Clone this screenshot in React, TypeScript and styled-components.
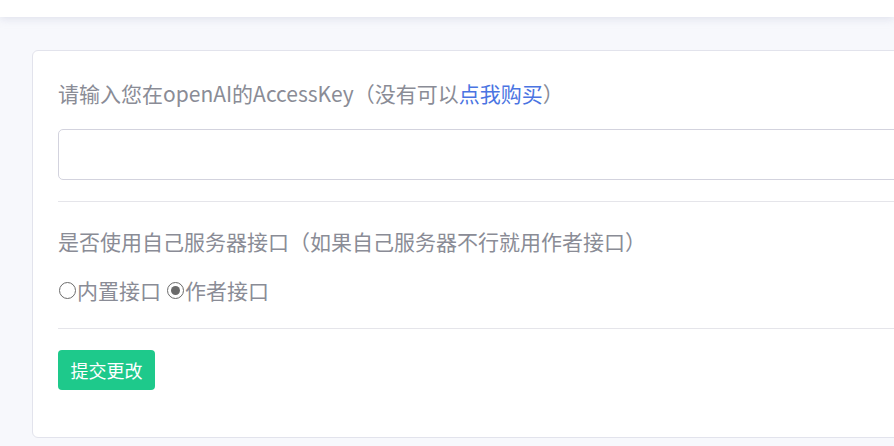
import React, { useState } from "react";
import styled, { createGlobalStyle } from "styled-components";

const Global = createGlobalStyle`
  html, body { margin: 0; padding: 0; background: #f7f8fc; overflow: hidden; }
  body { font-family: "Noto Sans CJK SC", "Noto Sans", sans-serif; }
  * { box-sizing: border-box; }
`;

const Page = styled.div`
  width: 894px;
  height: 446px;
  background: #f7f8fc;
  overflow: hidden;
`;

const Header = styled.header`
  height: 17px;
  background: #ffffff;
  box-shadow: 0 2px 8px rgba(180, 184, 210, 0.35);
`;

const Main = styled.main`
  padding: 33px 0 0 32px;
`;

const Card = styled.section`
  width: 900px;
  height: 388px;
  background: #ffffff;
  border: 1px solid #e2e3ec;
  border-radius: 6px;
  padding: 26px 25px 0 25px;
  display: flex;
  flex-direction: column;
`;

const Label = styled.div<{ $top?: number }>`
  margin-top: ${(p) => p.$top ?? 0}px;
  font-size: 21px;
  line-height: 32px;
  color: #8a8c96;
`;

const Link = styled.a`
  color: #4a74e2;
  text-decoration: none;
`;

const TextInput = styled.input`
  margin-top: 20px;
  width: 100%;
  height: 51px;
  border: 1px solid #d3d3de;
  border-radius: 5px;
  outline: none;
  font-size: 16px;
  padding: 0 12px;
`;

const Divider = styled.hr<{ $top: number }>`
  margin: ${(p) => p.$top}px 0 0 0;
  border: none;
  border-top: 1px solid #e5e5ea;
  width: 100%;
`;

const RadioRow = styled.div`
  margin-top: 17px;
  display: flex;
  align-items: center;
  font-size: 21px;
  line-height: 32px;
  color: #8a8c96;
`;

const RadioLabel = styled.label`
  display: inline-flex;
  align-items: center;
  cursor: pointer;
  margin-right: 5px;
`;

const Circle = styled.span<{ $checked: boolean }>`
  width: 17px;
  height: 17px;
  border-radius: 50%;
  border: 1.5px solid #6b6b6b;
  display: inline-flex;
  align-items: center;
  justify-content: center;
  margin: 0 1px 0 1px;
  &::after {
    content: "";
    width: 9px;
    height: 9px;
    border-radius: 50%;
    background: #6b6b6b;
    display: ${(p) => (p.$checked ? "block" : "none")};
  }
`;

const Button = styled.button`
  margin-top: 21px;
  align-self: flex-start;
  height: 40px;
  padding: 0 12.5px;
  border: none;
  border-radius: 4px;
  background: #1ec98b;
  color: #ffffff;
  font-family: "Noto Sans CJK SC", sans-serif;
  font-size: 18px;
  cursor: pointer;
`;

export default function App() {
  const [mode, setMode] = useState<"builtin" | "author">("author");
  return (
    <Page>
      <Global />
      <Header />
      <Main>
        <Card>
          <Label>
            请输入您在openAI的AccessKey（没有可以<Link href="#">点我购买</Link>）
          </Label>
          <TextInput type="text" />
          <Divider $top={21} />
          <Label $top={23}>
            是否使用自己服务器接口（如果自己服务器不行就用作者接口）
          </Label>
          <RadioRow>
            <RadioLabel onClick={() => setMode("builtin")}>
              <Circle $checked={mode === "builtin"} />
              内置接口
            </RadioLabel>
            <RadioLabel onClick={() => setMode("author")}>
              <Circle $checked={mode === "author"} />
              作者接口
            </RadioLabel>
          </RadioRow>
          <Divider $top={22} />
          <Button>提交更改</Button>
        </Card>
      </Main>
    </Page>
  );
}
